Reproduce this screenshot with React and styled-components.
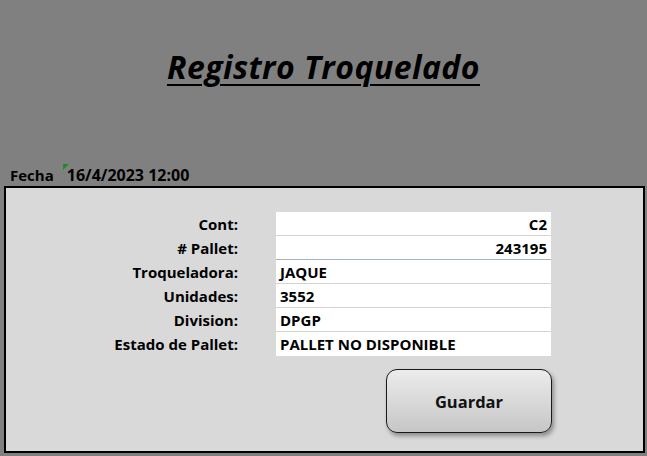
import React from 'react';
import styled, { createGlobalStyle } from 'styled-components';

const GlobalStyle = createGlobalStyle`
  html, body {
    margin: 0;
    padding: 0;
    background: #808080;
  }
  body {
    font-family: "Open Sans", "Liberation Sans", Arial, sans-serif;
    color: #000;
  }
`;

const Sheet = styled.div`
  width: 647px;
  height: 456px;
  background: #808080;
  display: flex;
  flex-direction: column;
  overflow: hidden;
`;

const Header = styled.header`
  height: 186px;
  display: flex;
  flex-direction: column;
  box-sizing: border-box;
`;

const Title = styled.h1`
  margin: 47px 0 0;
  text-align: center;
  font-size: 32px;
  font-weight: 700;
  font-style: italic;
  letter-spacing: 0.45px;
  text-decoration: underline;
  text-decoration-thickness: 2px;
  text-underline-offset: 5px;
  line-height: 40px;
`;

const DateRow = styled.div`
  margin-top: auto;
  padding: 0 0 2px 10px;
  display: flex;
  align-items: baseline;
  gap: 13px;
  font-size: 15px;
  font-weight: 700;
  line-height: 18px;
`;

const DateCell = styled.span`
  position: relative;
  font-size: 16px;

  &::before {
    content: '';
    position: absolute;
    left: -4px;
    top: -2px;
    border-top: 6px solid #1e8c2a;
    border-right: 6px solid transparent;
  }
`;

const Panel = styled.section`
  margin: 0 2px 3px 4px;
  height: 267px;
  box-sizing: border-box;
  border: 2px solid #000;
  background: #d9d9d9;
  padding: 24px 0 0 82px;
`;

const Form = styled.div`
  display: grid;
  grid-template-columns: 150px 275px;
  column-gap: 38px;
`;

const Label = styled.div`
  height: 24px;
  line-height: 24px;
  text-align: right;
  font-size: 15px;
  font-weight: 700;
  white-space: nowrap;
`;

const Field = styled.div`
  height: 24px;
  line-height: 24px;
  box-sizing: border-box;
  background: #fff;
  padding: 0 4px;
  font-size: 15px;
  font-weight: 700;
  white-space: nowrap;
  text-align: ${({ $right }) => ($right ? 'right' : 'left')};
  border-bottom: 1px solid ${({ $line }) => $line || '#d4d4d4'};
`;

const Actions = styled.div`
  grid-column: 2;
  display: flex;
  justify-content: flex-end;
  padding-top: 13px;
`;

const Button = styled.button`
  width: 166px;
  height: 64px;
  margin-right: -1px;
  border: 1px solid #1a1a1a;
  border-radius: 11px;
  background: linear-gradient(#ececec, #c6c6c6);
  box-shadow: 2px 3px 4px rgba(0, 0, 0, 0.35);
  font-family: inherit;
  font-size: 16.5px;
  font-weight: 700;
  color: #111;
  cursor: pointer;
`;

const rows = [
  { label: 'Cont:', value: 'C2', right: true },
  { label: '# Pallet:', value: '243195', right: true, line: '#9fb2c6' },
  { label: 'Troqueladora:', value: 'JAQUE' },
  { label: 'Unidades:', value: '3552' },
  { label: 'Division:', value: 'DPGP' },
  { label: 'Estado de Pallet:', value: 'PALLET NO DISPONIBLE', line: '#fff' },
];

export default function App() {
  return (
    <Sheet>
      <GlobalStyle />
      <Header>
        <Title>Registro Troquelado</Title>
        <DateRow>
          <span>Fecha</span>
          <DateCell>16/4/2023 12:00</DateCell>
        </DateRow>
      </Header>
      <Panel>
        <Form>
          {rows.map((r) => (
            <React.Fragment key={r.label}>
              <Label>{r.label}</Label>
              <Field $right={r.right} $line={r.line}>{r.value}</Field>
            </React.Fragment>
          ))}
          <Actions>
            <Button>Guardar</Button>
          </Actions>
        </Form>
      </Panel>
    </Sheet>
  );
}
